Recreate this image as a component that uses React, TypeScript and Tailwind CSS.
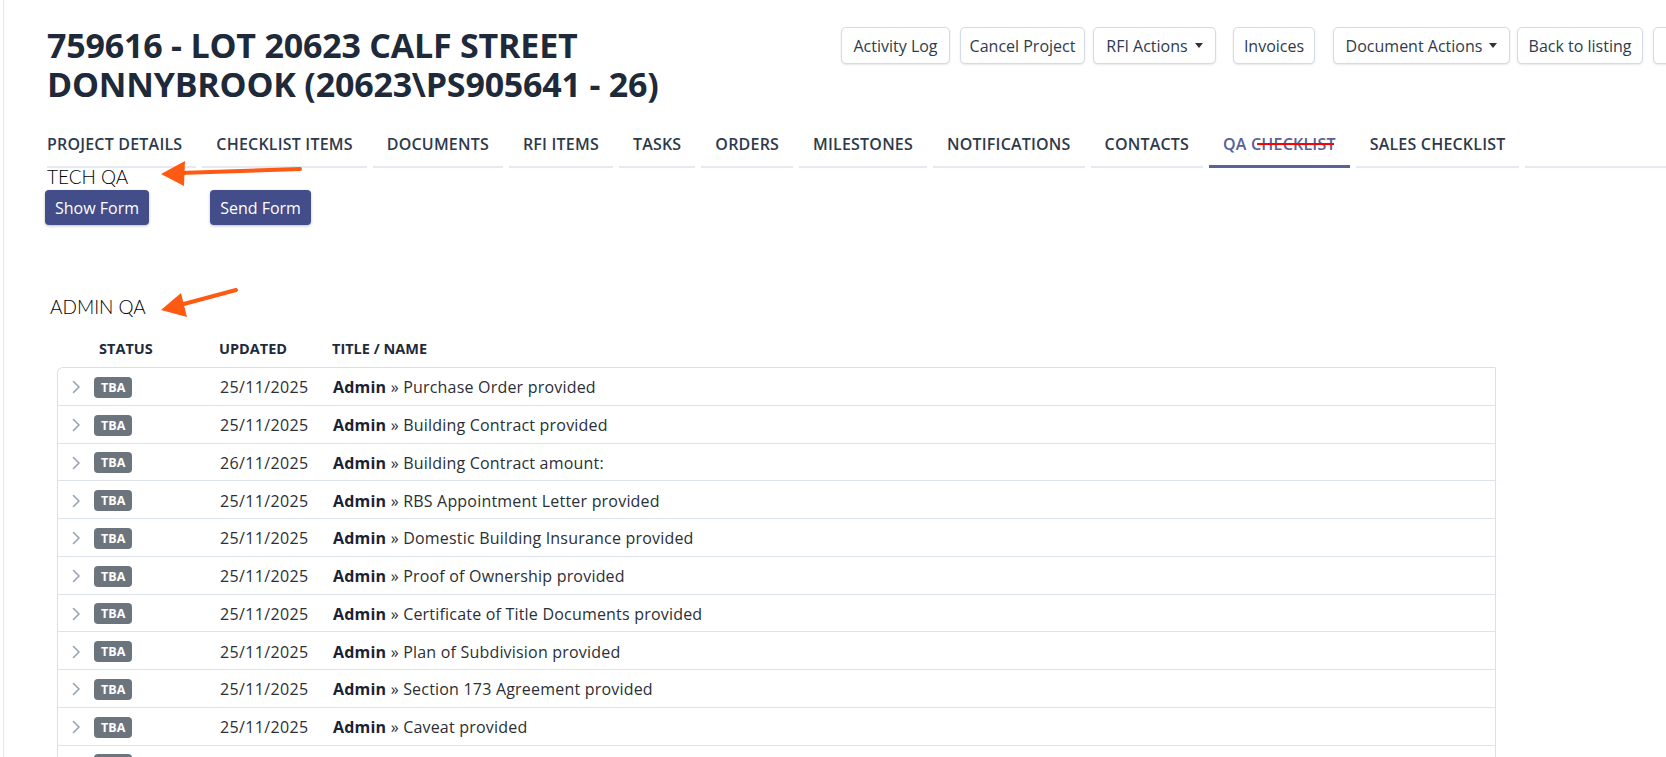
import React from "react";

type Row = { date: string; title: string };

const rows: Row[] = [
  { date: "25/11/2025", title: "Purchase Order provided" },
  { date: "25/11/2025", title: "Building Contract provided" },
  { date: "26/11/2025", title: "Building Contract amount:" },
  { date: "25/11/2025", title: "RBS Appointment Letter provided" },
  { date: "25/11/2025", title: "Domestic Building Insurance provided" },
  { date: "25/11/2025", title: "Proof of Ownership provided" },
  { date: "25/11/2025", title: "Certificate of Title Documents provided" },
  { date: "25/11/2025", title: "Plan of Subdivision provided" },
  { date: "25/11/2025", title: "Section 173 Agreement provided" },
  { date: "25/11/2025", title: "Caveat provided" },
  { date: "", title: "" },
];

const tabs = [
  "PROJECT DETAILS",
  "CHECKLIST ITEMS",
  "DOCUMENTS",
  "RFI ITEMS",
  "TASKS",
  "ORDERS",
  "MILESTONES",
  "NOTIFICATIONS",
  "CONTACTS",
  "QA CHECKLIST",
  "SALES CHECKLIST",
];

const Caret = () => (
  <span className="ml-[7px] inline-block h-0 w-0 border-x-[4px] border-t-[5px] border-x-transparent border-t-[#333]" />
);

const ActionButton: React.FC<{ label?: string; w: string; caret?: boolean; className?: string }> = ({
  label,
  w,
  caret,
  className,
}) => (
  <button
    className={
      "flex h-[37px] shrink-0 items-center justify-center rounded-[5px] border border-[#d4dbe6] bg-white text-[16px] text-[#2f3b4c] shadow-[0_1px_2px_rgba(30,50,90,0.12)] " +
      w +
      " " +
      (className || "")
    }
  >
    {label}
    {caret && <Caret />}
  </button>
);

const Chevron = () => (
  <svg width="9" height="14" viewBox="0 0 9 14" fill="none">
    <path d="M1.5 1.5 L7 7 L1.5 12.5" stroke="#97a3b4" strokeWidth="1.6" strokeLinecap="round" strokeLinejoin="round" />
  </svg>
);

export default function App() {
  return (
    <div className="relative min-h-screen overflow-hidden bg-white font-['Open_Sans',sans-serif] text-[#212529]">
      <div className="ml-[3px] min-h-screen border-l border-[#e3e8ef] pl-[43px]">
        {/* header */}
        <div className="flex items-start pt-[26px]">
          <h1 className="w-[794px] shrink-0 text-[34px] font-bold leading-[39px] tracking-[-0.2px] text-[#1e2a3a]">
            759616 - LOT 20623 CALF STREET
            <br />
            DONNYBROOK (20623\PS905641 - 26)
          </h1>
          <div className="mt-[1px] flex shrink-0 items-center">
            <ActionButton label="Activity Log" w="w-[109px]" />
            <ActionButton label="Cancel Project" w="w-[125px]" className="ml-[10px]" />
            <ActionButton label="RFI Actions" w="w-[123px]" caret className="ml-[8px]" />
            <ActionButton label="Invoices" w="w-[82px]" className="ml-[17px]" />
            <ActionButton label="Document Actions" w="w-[177px]" caret className="ml-[18px]" />
            <ActionButton label="Back to listing" w="w-[126px]" className="ml-[7px]" />
            <ActionButton w="w-[110px]" className="ml-[10px]" />
          </div>
        </div>

        {/* tabs */}
        <div className="mt-[30px] flex items-end">
          {tabs.map((t, i) => {
            const active = t === "QA CHECKLIST";
            return (
              <div
                key={t}
                className={
                  "relative shrink-0 text-[16px] font-semibold leading-[20px] tracking-[0.2px] " +
                  (i === 0 ? "pl-0 pr-[14px] " : "px-[14px] ml-[6px] ") +
                  (active
                    ? "border-b-[3px] border-[#5a6397] pb-[11px] text-[#56609a]"
                    : "border-b-2 border-[#e6eaf0] pb-[12px] text-[#2d3a4b]")
                }
              >
                {t}
                {active && (
                  <span className="absolute left-[48px] right-[16px] top-[9px] h-[2px] bg-[#ff0000]" />
                )}
              </div>
            );
          })}
          <div className="ml-[6px] flex-1 border-b-2 border-[#e6eaf0]" />
        </div>

        {/* tech qa */}
        <div className="-mt-[1px] font-['Lato',sans-serif] text-[19px] font-light leading-[20px] text-black">TECH QA</div>
        <div className="-ml-[2px] mt-[3px] flex items-center">
          <button className="h-[35px] w-[104px] rounded-[4px] bg-[#434d8a] text-[16px] text-white shadow-[0_1px_3px_rgba(0,0,0,0.25)]">
            Show Form
          </button>
          <button className="ml-[61px] h-[35px] w-[101px] rounded-[4px] bg-[#434d8a] text-[16px] text-white shadow-[0_1px_3px_rgba(0,0,0,0.25)]">
            Send Form
          </button>
        </div>

        {/* admin qa */}
        <div className="ml-[3px] mt-[72px] font-['Lato',sans-serif] text-[19px] font-light leading-[20px] text-black">
          ADMIN QA
        </div>

        <div className="w-[1449px]">
          {/* table header */}
          <div className="mt-[22px] grid grid-cols-[172px_113px_1fr] pb-[9px] text-[14.5px] font-bold leading-[19px] text-[#1f2a3b]">
            <div className="pl-[52px]">STATUS</div>
            <div>UPDATED</div>
            <div>TITLE / NAME</div>
          </div>
          <div className="ml-[10px] rounded-tl-[6px] rounded-tr-[2px] border-l border-r border-t border-[#d9e0ea]">
            {rows.map((r, i) => (
              <div
                key={i}
                className="grid h-[37.75px] grid-cols-[162px_113px_1fr] items-center border-b border-[#dde3ec] pt-[2px] text-[16px] text-[#2b2f36]"
              >
                <div className="flex items-center pl-[14px]">
                  <Chevron />
                  <span className="ml-[13px] rounded-[4px] bg-[#6c757d] px-[7px] text-[12.5px] font-bold leading-[21px] text-white">
                    TBA
                  </span>
                </div>
                <div className="tracking-[0.35px]">{r.date}</div>
                <div className="tracking-[0.2px]">
                  {r.title && (
                    <>
                      <span className="font-bold text-[#1a2233]">Admin</span> » {r.title}
                    </>
                  )}
                </div>
              </div>
            ))}
          </div>
        </div>
      </div>

      {/* annotation arrows */}
      <svg className="pointer-events-none absolute left-0 top-0" width="1666" height="757" viewBox="0 0 1666 757">
        <line x1="300" y1="169" x2="180" y2="173" stroke="#ff5a14" strokeWidth="4" strokeLinecap="round" />
        <polygon points="161,174 185,161 184,186" fill="#ff5a14" />
        <line x1="236" y1="290" x2="180" y2="305" stroke="#ff5a14" strokeWidth="4" strokeLinecap="round" />
        <polygon points="161,310 181,293 187,317" fill="#ff5a14" />
      </svg>
    </div>
  );
}
